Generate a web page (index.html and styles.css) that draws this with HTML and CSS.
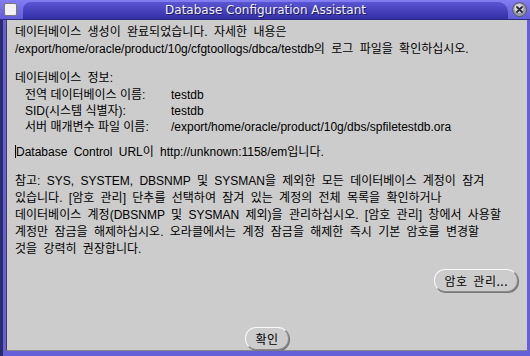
FILE: index.html
```html
<!DOCTYPE html>
<html lang="ko">

  <head>
    <meta charset="UTF-8">
    <title>Database Configuration Assistant</title>
    <link rel="stylesheet" href="styles.css">
  </head>

  <body>

    <div class="window">
      <div class="titlebar">
        <div class="win-icon"></div>
        <div class="title-tab">Database Configuration Assistant</div>
        <div class="close-btn">
          <svg width="15" height="15" viewBox="0 0 15 15">
            <circle cx="7.5" cy="7.5" r="7" fill="#9a9aa6" stroke="#55556a" stroke-width="1"/>
            <circle cx="7" cy="6.5" r="4.5" fill="#d8d8e0"/>
            <path d="M5 5 L10 10 M10 5 L5 10" stroke="#2a2a35" stroke-width="1.8" stroke-linecap="round"/>
          </svg>
        </div>
      </div>

      <div class="frame">
        <div class="content">
          <p>
            데이터베이스 생성이 완료되었습니다. 자세한 내용은<br>
            /export/home/oracle/product/10g/cfgtoollogs/dbca/testdb의 로그 파일을 확인하십시오.
          </p>

          <div class="info">
            <div>데이터베이스 정보:</div>
            <div class="info-grid">
              <span>전역 데이터베이스 이름:</span><span>testdb</span>
              <span>SID(시스템 식별자):</span><span>testdb</span>
              <span>서버 매개변수 파일 이름:</span><span>/export/home/oracle/product/10g/dbs/spfiletestdb.ora</span>
            </div>
          </div>

          <p class="url"><span class="caret"></span>Database Control URL이 http://unknown:1158/em입니다.</p>

          <p>
            참고: SYS, SYSTEM, DBSNMP 및 SYSMAN을 제외한 모든 데이터베이스 계정이 잠겨<br>
            있습니다. [암호 관리] 단추를 선택하여 잠겨 있는 계정의 전체 목록을 확인하거나<br>
            데이터베이스 계정(DBSNMP 및 SYSMAN 제외)을 관리하십시오. [암호 관리] 창에서 사용할<br>
            계정만 잠금을 해제하십시오. 오라클에서는 계정 잠금을 해제한 즉시 기본 암호를 변경할<br>
            것을 강력히 권장합니다.
          </p>

          <div class="pw-row">
            <button class="pill-btn">암호 관리...</button>
          </div>

          <div class="ok-row">
            <button class="pill-btn">확인</button>
          </div>
        </div>
      </div>
    </div>

  </body>

</html>
```

FILE: styles.css
```css
body {
  margin: 0;
  padding: 0;
  background-color: #1d2a4a;
  font-family: 'Liberation Sans', 'Noto Sans CJK KR', sans-serif;
}

.window {
  width: 530px;
  height: 356px;
  display: flex;
  flex-direction: column;
  overflow: hidden;
}

/* title bar */
.titlebar {
  height: 19px;
  display: flex;
  align-items: center;
  background: linear-gradient(#827df0, #625dd8);
  border-bottom: 1px solid #2e2a80;
}

.win-icon {
  width: 11px;
  height: 11px;
  margin: 0 6px 0 4px;
  background: #f2f2f4;
  border: 1px solid #777;
  border-radius: 2px;
}

.title-tab {
  flex: 1;
  height: 17px;
  margin-top: 2px;
  background: linear-gradient(#5a55d0, #3530a8);
  border-radius: 8px 10px 0 0;
  color: #f0f0f8;
  font-family: 'DejaVu Sans', sans-serif;
  font-size: 12px;
  line-height: 17px;
  text-align: center;
  text-shadow: 1px 1px 0 #1e1b5e;
}

.close-btn {
  width: 15px;
  height: 15px;
  margin: 0 3px 0 4px;
}

/* frame + content */
.frame {
  flex: 1;
  display: flex;
  background: #6560d8;
  padding: 0 3px 5px 3px;
  border-left: 3px solid #2b2a6a;
  border-bottom: 2px solid #2b2a6a;
}

.content {
  flex: 1;
  background: #cccccc;
  border-left: 1px solid #444;
  border-bottom: 1px solid #888;
  padding: 4px 8px 0 8px;
  font-size: 12px;
  line-height: 17px;
  word-spacing: 3px;
  color: #000;
  white-space: nowrap;
  display: flex;
  flex-direction: column;
}

.content p {
  margin: 0 0 12px 0;
}

.info {
  margin-bottom: 9px;
}

.info-grid {
  display: grid;
  grid-template-columns: 146px auto;
  padding-left: 10px;
  line-height: 16px;
  word-spacing: 0;
}

.caret {
  display: inline-block;
  width: 1px;
  height: 13px;
  background: #000;
  vertical-align: -2px;
}

.pw-row {
  display: flex;
  justify-content: flex-end;
  margin-top: -1px;
  padding-right: 1px;
}

.ok-row {
  display: flex;
  justify-content: center;
  margin-top: 35px;
}

.pill-btn {
  height: 23px;
  padding: 0 9px;
  font-family: 'Noto Sans CJK KR', sans-serif;
  font-size: 12px;
  letter-spacing: 0.5px;
  word-spacing: 2px;
  color: #000;
  background: #cccccc;
  border: 1px solid #8a8a8a;
  border-top-color: #fafafa;
  border-left-color: #fafafa;
  border-radius: 11px;
  box-shadow: 1px 1px 0 #777;
  cursor: pointer;
}
```
